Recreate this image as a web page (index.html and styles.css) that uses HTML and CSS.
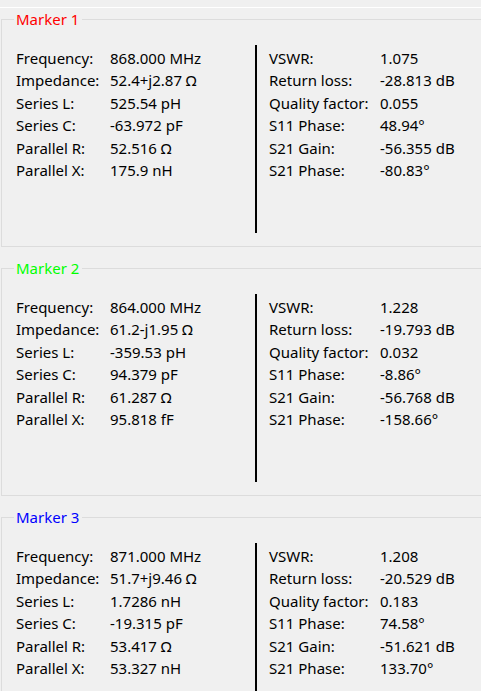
FILE: index.html
```html
<!DOCTYPE html>
<html>
    <head>
        <meta charset="UTF-8">
        <link rel="stylesheet" href="styles.css">
    </head>
    <body>
        <div class="panel">
            <fieldset class="marker">
                <legend class="red">Marker 1</legend>
                <div class="readout">
                    <div class="col colLeft">
                        <span>Frequency:</span><span>868.000 MHz</span>
                        <span>Impedance:</span><span>52.4+j2.87 &Omega;</span>
                        <span>Series L:</span><span>525.54 pH</span>
                        <span>Series C:</span><span>-63.972 pF</span>
                        <span>Parallel R:</span><span>52.516 &Omega;</span>
                        <span>Parallel X:</span><span>175.9 nH</span>
                    </div>
                    <div class="divider"></div>
                    <div class="col colRight">
                        <span>VSWR:</span><span>1.075</span>
                        <span>Return loss:</span><span>-28.813 dB</span>
                        <span>Quality factor:</span><span>0.055</span>
                        <span>S11 Phase:</span><span>48.94&deg;</span>
                        <span>S21 Gain:</span><span>-56.355 dB</span>
                        <span>S21 Phase:</span><span>-80.83&deg;</span>
                    </div>
                </div>
            </fieldset>

            <fieldset class="marker">
                <legend class="green">Marker 2</legend>
                <div class="readout">
                    <div class="col colLeft">
                        <span>Frequency:</span><span>864.000 MHz</span>
                        <span>Impedance:</span><span>61.2-j1.95 &Omega;</span>
                        <span>Series L:</span><span>-359.53 pH</span>
                        <span>Series C:</span><span>94.379 pF</span>
                        <span>Parallel R:</span><span>61.287 &Omega;</span>
                        <span>Parallel X:</span><span>95.818 fF</span>
                    </div>
                    <div class="divider"></div>
                    <div class="col colRight">
                        <span>VSWR:</span><span>1.228</span>
                        <span>Return loss:</span><span>-19.793 dB</span>
                        <span>Quality factor:</span><span>0.032</span>
                        <span>S11 Phase:</span><span>-8.86&deg;</span>
                        <span>S21 Gain:</span><span>-56.768 dB</span>
                        <span>S21 Phase:</span><span>-158.66&deg;</span>
                    </div>
                </div>
            </fieldset>

            <fieldset class="marker">
                <legend class="blue">Marker 3</legend>
                <div class="readout">
                    <div class="col colLeft">
                        <span>Frequency:</span><span>871.000 MHz</span>
                        <span>Impedance:</span><span>51.7+j9.46 &Omega;</span>
                        <span>Series L:</span><span>1.7286 nH</span>
                        <span>Series C:</span><span>-19.315 pF</span>
                        <span>Parallel R:</span><span>53.417 &Omega;</span>
                        <span>Parallel X:</span><span>53.327 nH</span>
                    </div>
                    <div class="divider"></div>
                    <div class="col colRight">
                        <span>VSWR:</span><span>1.208</span>
                        <span>Return loss:</span><span>-20.529 dB</span>
                        <span>Quality factor:</span><span>0.183</span>
                        <span>S11 Phase:</span><span>74.58&deg;</span>
                        <span>S21 Gain:</span><span>-51.621 dB</span>
                        <span>S21 Phase:</span><span>133.70&deg;</span>
                    </div>
                </div>
            </fieldset>
        </div>
    </body>
</html>
```

FILE: styles.css
```css
html, body {
    height: 100%;
}

body {
    margin: 0;
    overflow: hidden;
    background: #f0f0f0;
    font-family: "Noto Sans", Arial, sans-serif;
    font-size: 15px;
    color: #000000;
}

.panel {
    margin-top: 7px;
    border-top: 1px solid #ffffff;
}

.marker {
    margin: 0 0 10px 1px;
    padding: 0 0 0 12px;
    min-width: 0;
    border: 1px solid #dcdcdc;
    border-right: none;
}

.marker legend {
    padding: 0 3px 0 2px;
    line-height: 22px;
}

.red {
    color: #ff0000;
}

.green {
    color: #00ff00;
}

.blue {
    color: #0000ff;
}

.readout {
    display: flex;
    height: 188px;
    padding: 15px 0 13px 0;
}

.col {
    display: grid;
    align-content: start;
    padding-top: 2px;
    line-height: 22.4px;
    white-space: nowrap;
}

.colLeft {
    width: 239px;
    padding-left: 2px;
    grid-template-columns: 94px auto;
}

.divider {
    width: 2px;
    background: #000000;
}

.colRight {
    padding-left: 12px;
    grid-template-columns: 111px auto;
}
```
